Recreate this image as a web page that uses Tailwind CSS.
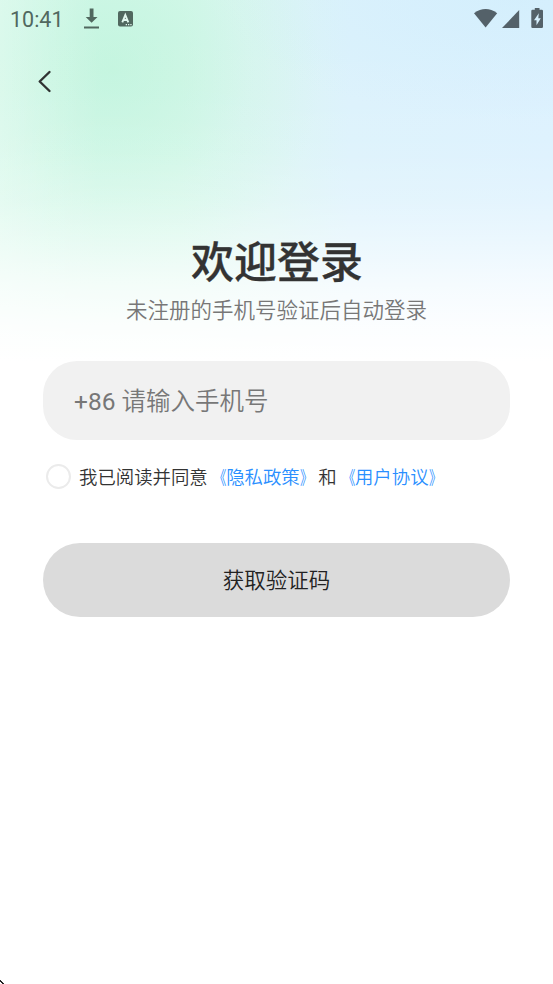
<!DOCTYPE html>
<html lang="zh-CN">
<head>
<meta charset="utf-8">
<title>欢迎登录</title>
<script src="https://cdn.jsdelivr.net/npm/@tailwindcss/browser@4"></script>
</head>
<body class="bg-white font-['Roboto','Noto_Sans_CJK_SC',sans-serif]">
<div class="relative w-[553px] h-[984px] overflow-hidden bg-white bg-no-repeat bg-[linear-gradient(to_bottom,rgb(255_255_255/0)_0px,rgb(255_255_255/0.02)_90px,rgb(255_255_255/0.08)_150px,rgb(255_255_255/0.22)_200px,rgb(255_255_255/0.44)_240px,rgb(255_255_255/0.72)_285px,rgb(255_255_255/0.9)_325px,#fff_362px),linear-gradient(to_right,rgb(255_255_255/0.25),rgb(255_255_255/0.1)_50px,rgb(255_255_255/0)_100px),radial-gradient(ellipse_210px_210px_at_112px_70px,rgb(190_244_220/0.75)_0%,rgb(190_244_220/0.5)_30%,rgb(190_244_220/0.16)_65%,rgb(190_244_220/0)_100%),radial-gradient(ellipse_300px_120px_at_520px_0px,rgb(207_237_252/0.6),rgb(207_237_252/0)),linear-gradient(to_right,#d4f8e9_0px,#d7f8eb_180px,#dbf5f3_270px,#dcf2fc_350px,#dcf1fe_553px)]">
  <header class="flex h-[38px] items-center justify-between pl-[10px] pr-[9px]">
    <div class="flex items-center text-[#51685f]">
      <span class="w-[73px] pt-[2px] text-[21.5px] leading-[38px]">10:41</span>
      <svg class="w-[17px] h-[22px]" viewBox="0 0 17 22" fill="currentColor"><path d="M6.7 0.500h3.800v8.500h4L8.600 14.700 2.700 9h4zM1 18.500h15v2H1z"/></svg>
      <svg class="ml-[18px] w-[15px] h-[16px]" viewBox="0 0 15 16"><rect width="15" height="15.500" rx="2" fill="currentColor"/><path d="M4.300 11.300 7.300 4 10.300 11.300M5.200 9h4.200" fill="none" stroke="#e2f8ef" stroke-width="1.900"/><path d="M7.700 13h1.300v1.200H7.700zM10 13h1.300v1.200H10zM12.300 13h1.300v1.200h-1.300z" fill="#e2f8ef"/></svg>
    </div>
    <svg class="w-[70px] h-[22px] text-[#546169]" viewBox="0 0 70 22" fill="currentColor"><path d="M0 5.200Q11.600-3 23.200 5.200L11.600 19.500z"/><path d="M28 20 45.200 2V20z"/><path fill-rule="evenodd" d="M60.800 0h4.700v1.800h2.300q1.200 0 1.200 1.200v15.800q0 1.200-1.200 1.200h-9.300q-1.200 0-1.200-1.200V3q0-1.200 1.200-1.200h2.300zM64.800 5.200 60 12.300h2.500v4.900l4.300-7h-2.500z"/></svg>
  </header>
  <nav class="flex h-[86px] items-center pl-[37px]">
    <svg class="w-[16px] h-[24px]" viewBox="0 0 16 24" fill="none" stroke="#303332" stroke-width="2.400" stroke-linecap="round" stroke-linejoin="round"><path d="M12.500 3 2.700 12.500 12.500 22"/></svg>
  </nav>
  <main class="flex flex-col px-[43px] pt-[107px]">
    <h1 class="pl-[1px] text-center text-[43px] leading-[64px] font-medium text-[#333] [-webkit-text-stroke:0.3px_#333]">欢迎登录</h1>
    <p class="text-center text-[21.500px] leading-[32px] font-[350] text-[#777]">未注册的手机号验证后自动登录</p>
    <div class="mt-[34px] flex h-[79px] items-center rounded-[34px] bg-[#f1f1f1] pt-[4px] pl-[31px] text-[24.500px] font-[350] whitespace-pre text-[#777]"><span class="font-normal">+86 </span>请输入手机号</div>
    <div class="mt-[22px] flex h-[28px] items-center pl-[3px]">
      <span class="h-[25px] w-[25px] rounded-full border-2 border-[#ebebeb] bg-white"></span>
      <p class="ml-[8px] whitespace-nowrap font-['Noto_Sans_CJK_SC',sans-serif] text-[18.400px] leading-[28px] font-[350] text-[#333]">我已阅读并同意<span class="text-[#2a8fff]"><span class="inline-block origin-right scale-x-[0.7]">《</span>隐私政策<span class="inline-block origin-left scale-x-[0.7]">》</span></span>和<span class="text-[#2a8fff]"><span class="inline-block origin-right scale-x-[0.7]">《</span>用户协议<span class="inline-block origin-left scale-x-[0.7]">》</span></span></p>
    </div>
    <button class="mt-[53px] h-[74px] rounded-full bg-[#dbdbdb] pt-[2px] text-[21.500px] font-[350] text-[#222]">获取验证码</button>
  </main>
  <svg class="absolute bottom-0 left-0 h-[4px] w-[4px]" viewBox="0 0 4 4" fill="#222"><path d="M0 0h1v1h1v1h1v1h1v1H2V3H1V2H0z"/></svg>
</div>
</body>
</html>
